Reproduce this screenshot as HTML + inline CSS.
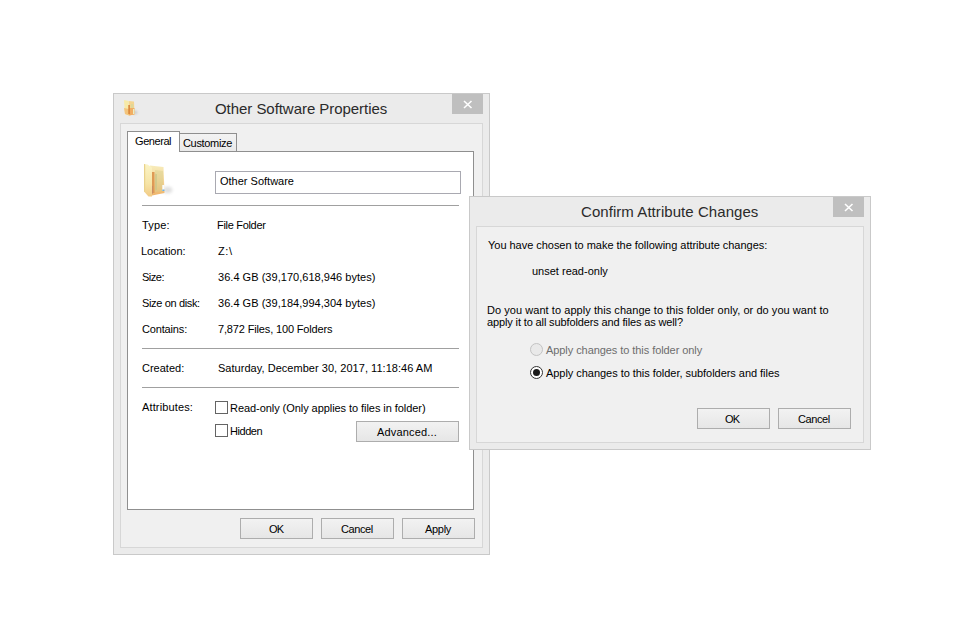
<!DOCTYPE html>
<html>
<head>
<meta charset="utf-8">
<style>
html,body{margin:0;padding:0;background:#fff;}
body{width:960px;height:640px;position:relative;overflow:hidden;font-family:"Liberation Sans",sans-serif;font-size:11px;color:#000;}
.a{position:absolute;box-sizing:border-box;}
.t{position:absolute;white-space:nowrap;line-height:13px;height:13px;}
.win{position:absolute;box-sizing:border-box;background:#ebebeb;border:1px solid #c9c9c9;}
.frame{position:absolute;box-sizing:border-box;background:#f0f0f0;border:1px solid #d7d7d7;}
.close{position:absolute;background:#bfbfbf;}
.btn{position:absolute;box-sizing:border-box;border:1px solid #adadad;background:linear-gradient(#f2f2f2,#e6e6e6);}
.title{position:absolute;white-space:nowrap;font-size:15px;line-height:18px;color:#2a2a2a;}
.sep{position:absolute;height:1px;background:#a0a0a0;}
.cb{position:absolute;box-sizing:border-box;width:13px;height:13px;border:1px solid #646464;background:#fff;}
</style>
</head>
<body>

<!-- ===== Main properties window ===== -->
<div class="win" style="left:113px;top:93px;width:377px;height:462px;"></div>
<!-- folder icon small -->
<svg class="a" style="left:118px;top:96px" width="24" height="24" viewBox="118 96 24 24">
  <defs><filter id="bl1" x="-50%" y="-50%" width="200%" height="200%"><feGaussianBlur stdDeviation="0.9"/></filter></defs>
  <ellipse cx="135" cy="112.5" rx="2.5" ry="2" fill="#b8b8b8" opacity="0.6" filter="url(#bl1)"/>
  <path d="M128.5 101 L134 101.5 L134.5 114.5 L129 115.5 Z" fill="#f4d590"/>
  <path d="M129 108 L134.5 108 L134.5 114.5 L129 115.5 Z" fill="#f1ad63"/>
  <path d="M131 104 L133 104 L133.5 108 L131 108Z" fill="#d9d79a" opacity="0.8"/>
  <path d="M124 100 L128.5 101 L129 115.5 L125 114 Z" fill="#f7eaa8"/>
  <path d="M124 108 L129 109 L129 115.5 L125 114 Z" fill="#f3c47c"/>
  <rect x="128.3" y="105" width="1.6" height="9" fill="#d9863a"/>
  <rect x="133" y="109" width="1.3" height="5" fill="#e8eec8"/>
</svg>
<div class="title" style="left:215px;top:100px;letter-spacing:-0.05px;">Other Software Properties</div>
<div class="close" style="left:452px;top:94px;width:31px;height:20px;">
  <svg width="31" height="20" viewBox="0 0 31 20" style="position:absolute;left:0;top:0"><path d="M12 7 L19.5 14 M19.5 7 L12 14" stroke="#fff" stroke-width="1.6"/></svg>
</div>
<div class="frame" style="left:120px;top:123px;width:363px;height:425px;"></div>

<!-- tabs -->
<div class="a" style="left:179px;top:133px;width:58px;height:19px;border:1px solid #8f8f8f;border-bottom:none;background:linear-gradient(#f3f3f3,#e9e9e9);"></div>
<div class="a" style="left:127px;top:151px;width:347px;height:359px;border:1px solid #8f8f8f;background:#fff;"></div>
<div class="a" style="left:127px;top:131px;width:53px;height:21px;border:1px solid #8f8f8f;border-bottom:none;background:#fff;"></div>
<div class="t" style="left:135px;top:135px;letter-spacing:-0.43px;">General</div>
<div class="t" style="left:183px;top:137px;letter-spacing:-0.33px;">Customize</div>

<!-- big folder icon -->
<svg class="a" style="left:138px;top:158px" width="40" height="44" viewBox="138 158 40 44">
  <defs>
    <filter id="bl2" x="-50%" y="-50%" width="200%" height="200%"><feGaussianBlur stdDeviation="1.6"/></filter>
    <linearGradient id="gback" x1="0" y1="0" x2="0" y2="1"><stop offset="0" stop-color="#f8ecbb"/><stop offset="0.5" stop-color="#f3d597"/><stop offset="1" stop-color="#efb46a"/></linearGradient>
    <linearGradient id="gflap" x1="0" y1="0" x2="0" y2="1"><stop offset="0" stop-color="#fbf4c6"/><stop offset="0.6" stop-color="#f6e4a6"/><stop offset="1" stop-color="#f2cb86"/></linearGradient>
  </defs>
  <ellipse cx="167.5" cy="190" rx="5" ry="3.5" fill="#a8a8a8" opacity="0.35" filter="url(#bl2)"/>
  <path d="M150 165.5 L163.5 167 L164.5 193 L152 195.5 Z" fill="url(#gback)"/>
  <path d="M155 170 L163 171 L163 191 L155 192 Z" fill="#d6cf8e" opacity="0.45"/>
  <rect x="151.5" y="172" width="3" height="21" fill="#de9a55"/>
  <rect x="151.5" y="186" width="1.2" height="8" fill="#b88078" opacity="0.7"/>
  <path d="M155 174 L157 175 L155 176 L157 177 L155 178 L157 179 L155 180 L157 181 L155 182 L157 183 L155 184 L157 185 L155 186 L157 187 L155 188 L157 189 L155 190" stroke="#c9c58a" stroke-width="1" fill="none" opacity="0.8"/>
  <path d="M144 164 L147.5 164.5 L152 167.5 L152 196.5 L148.5 196.5 L144 191.5 Z" fill="url(#gflap)"/>
  <path d="M144 164 L145.2 164.2 L145.2 191.5 L144 191.5Z" fill="#e9d28b"/>
  <rect x="162.3" y="185" width="2.2" height="6" fill="#fbfbfb"/>
  <rect x="162.3" y="189.5" width="2.2" height="1.5" fill="#6fb0e0"/>
</svg>

<!-- name box -->
<div class="a" style="left:215px;top:171px;width:246px;height:23px;border:1px solid #a9a9b1;background:#fff;"></div>
<div class="t" style="left:220px;top:175px;">Other Software</div>

<div class="sep" style="left:142px;top:205px;width:317px;"></div>

<div class="t" style="left:142px;top:219px;letter-spacing:0.15px;">Type:</div>
<div class="t" style="left:217px;top:219px;letter-spacing:-0.31px;">File Folder</div>
<div class="t" style="left:141px;top:245px;">Location:</div>
<div class="t" style="left:218px;top:245px;letter-spacing:0.65px;">Z:\</div>
<div class="t" style="left:142px;top:271px;letter-spacing:-0.5px;">Size:</div>
<div class="t" style="left:218px;top:271px;letter-spacing:0.03px;">36.4 GB (39,170,618,946 bytes)</div>
<div class="t" style="left:142px;top:297px;letter-spacing:-0.35px;">Size on disk:</div>
<div class="t" style="left:218px;top:297px;letter-spacing:0.03px;">36.4 GB (39,184,994,304 bytes)</div>
<div class="t" style="left:142px;top:323px;letter-spacing:-0.16px;">Contains:</div>
<div class="t" style="left:218px;top:323px;letter-spacing:-0.15px;">7,872 Files, 100 Folders</div>

<div class="sep" style="left:142px;top:348px;width:317px;"></div>

<div class="t" style="left:142px;top:362px;">Created:</div>
<div class="t" style="left:218px;top:362px;letter-spacing:0.035px;">Saturday, December 30, 2017, 11:18:46 AM</div>

<div class="sep" style="left:142px;top:387px;width:317px;"></div>

<div class="t" style="left:142px;top:401px;letter-spacing:0.14px;">Attributes:</div>
<div class="cb" style="left:215px;top:401px;"></div>
<div class="t" style="left:230px;top:402px;letter-spacing:-0.06px;">Read-only (Only applies to files in folder)</div>
<div class="cb" style="left:215px;top:424px;"></div>
<div class="t" style="left:230px;top:425px;letter-spacing:-0.46px;">Hidden</div>
<div class="btn" style="left:356px;top:421px;width:103px;height:21px;"></div>
<div class="t" style="left:377px;top:426px;letter-spacing:0.16px;">Advanced...</div>

<div class="btn" style="left:240px;top:518px;width:73px;height:21px;"></div>
<div class="t" style="left:269px;top:523px;letter-spacing:-0.7px;">OK</div>
<div class="btn" style="left:321px;top:518px;width:73px;height:21px;"></div>
<div class="t" style="left:341px;top:523px;letter-spacing:-0.42px;">Cancel</div>
<div class="btn" style="left:402px;top:518px;width:73px;height:21px;"></div>
<div class="t" style="left:425px;top:523px;letter-spacing:-0.3px;">Apply</div>

<!-- ===== Confirm dialog ===== -->
<div class="win" style="left:469px;top:196px;width:402px;height:254px;"></div>
<div class="title" style="left:581px;top:203px;letter-spacing:0.06px;">Confirm Attribute Changes</div>
<div class="close" style="left:833px;top:197px;width:31px;height:20px;">
  <svg width="31" height="20" viewBox="0 0 31 20" style="position:absolute;left:0;top:0"><path d="M12 7 L19.5 14 M19.5 7 L12 14" stroke="#fff" stroke-width="1.6"/></svg>
</div>
<div class="frame" style="left:476px;top:226px;width:388px;height:217px;"></div>

<div class="t" style="left:488px;top:239px;letter-spacing:-0.03px;">You have chosen to make the following attribute changes:</div>
<div class="t" style="left:532px;top:265px;">unset read-only</div>
<div class="t" style="left:487px;top:304px;letter-spacing:0.053px;">Do you want to apply this change to this folder only, or do you want to</div>
<div class="t" style="left:487px;top:316px;letter-spacing:-0.13px;">apply it to all subfolders and files as well?</div>

<div class="a" style="left:530px;top:343px;width:13px;height:13px;border-radius:50%;border:1px solid #c3c3c3;background:#e9e9e9;"></div>
<div class="t" style="left:546px;top:344px;color:#6d6d6d;letter-spacing:-0.067px;">Apply changes to this folder only</div>
<div class="a" style="left:530px;top:366px;width:13px;height:13px;border-radius:50%;border:1px solid #333;background:#fff;"></div>
<div class="a" style="left:533px;top:369px;width:7px;height:7px;border-radius:50%;background:#1a1a1a;"></div>
<div class="t" style="left:546px;top:367px;letter-spacing:-0.04px;">Apply changes to this folder, subfolders and files</div>

<div class="btn" style="left:697px;top:408px;width:73px;height:21px;"></div>
<div class="t" style="left:725px;top:413px;letter-spacing:-0.7px;">OK</div>
<div class="btn" style="left:778px;top:408px;width:73px;height:21px;"></div>
<div class="t" style="left:798px;top:413px;letter-spacing:-0.4px;">Cancel</div>

</body>
</html>
